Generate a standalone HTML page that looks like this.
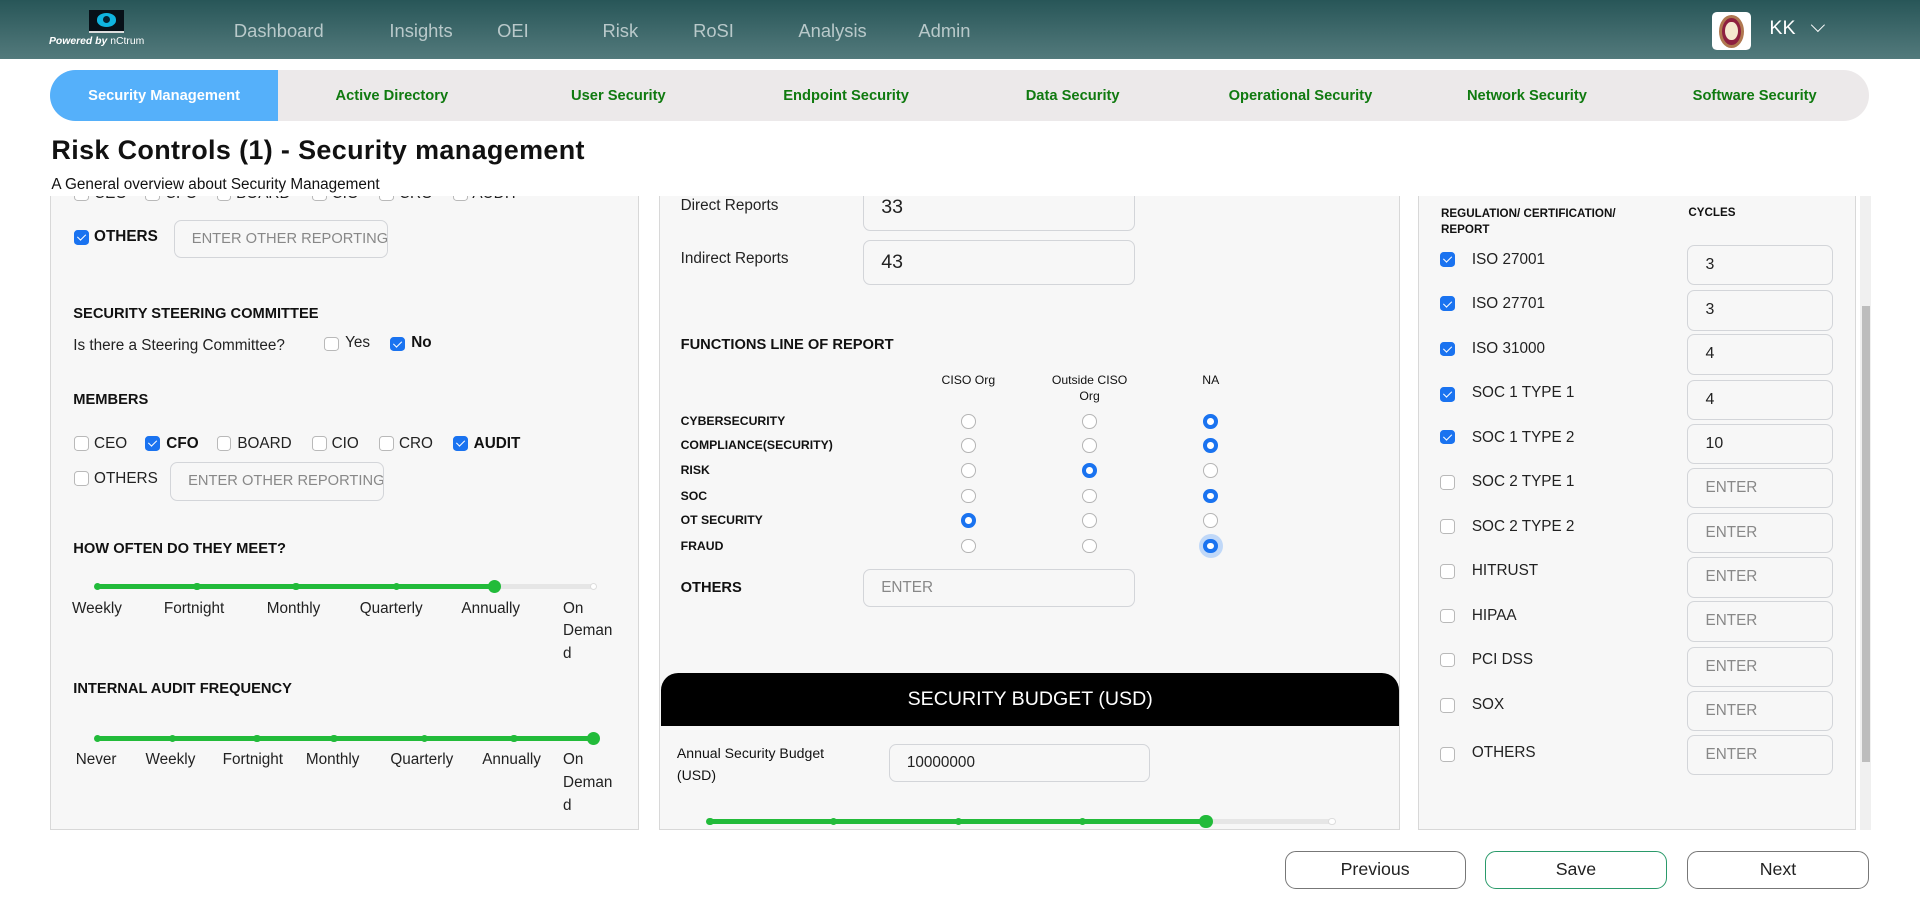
<!DOCTYPE html>
<html><head><meta charset="utf-8">
<style>
*{box-sizing:border-box;margin:0;padding:0}
html,body{width:1920px;height:910px;overflow:hidden;background:#fff}
#root{zoom:1.2245;width:1568px;height:743px;position:relative;font-family:"Liberation Sans",sans-serif;color:#111}
.a{position:absolute;white-space:nowrap}
.hdr{position:absolute;left:0;top:0;width:1568px;height:48px;background:linear-gradient(#285658,#537a7c)}
.nav{position:absolute;top:16px;font-size:15px;color:#b9c9ca}
.tabs{position:absolute;left:41px;top:57px;width:1485px;height:42px;background:#ece9ea;border-radius:21px;overflow:hidden}
.tab{position:absolute;top:0;height:42px;line-height:43px;font-size:12px;font-weight:bold;color:#107a10;text-align:center;width:186px}
.panel{position:absolute;top:160px;background:#f7f7f7;border:1px solid #d8d8d8;border-top:none;overflow:hidden}
.cb{position:absolute;width:12px;height:12px;border:1px solid #b9b9b9;border-radius:3px;background:#fff}
.cb.on{background:#1a73f0;border-color:#1a73f0}
.cb.on:after{content:"";position:absolute;left:3px;top:1px;width:3px;height:6px;border:solid #fff;border-width:0 1.5px 1.5px 0;transform:rotate(45deg)}
.lbl{position:absolute;font-size:12.5px;white-space:nowrap;color:#222}
.b{font-weight:bold;color:#111}
.h{position:absolute;font-size:12px;font-weight:bold;white-space:nowrap;color:#111}
.inp{position:absolute;border:1px solid #d3d5d9;border-radius:6px;background:#f7f7f7;font-size:12.5px;color:#888;padding-left:14px;display:flex;align-items:center;white-space:nowrap;overflow:hidden}
.rd{position:absolute;width:12px;height:12px;border:1px solid #b5b5b5;border-radius:50%;background:#fff}
.rd.on{border:3.5px solid #1a73f0}
.trk{position:absolute;height:4px;background:#e6e6e6;border-radius:2px}
.fil{position:absolute;height:4px;background:#22bb3a;border-radius:2px}
.dot{position:absolute;width:6px;height:6px;border-radius:50%;background:#22bb3a;margin:-1px 0 0 -3px}
.big{position:absolute;width:11px;height:11px;border-radius:50%;background:#22bb3a;margin:-3.5px 0 0 -5.5px}
.sl{position:absolute;font-size:12.5px;color:#222;line-height:18.5px;white-space:normal}
.btn{position:absolute;top:695px;width:148px;height:31px;border:1px solid #777;border-radius:9px;text-align:center;line-height:29px;font-size:14.5px;color:#222}
</style></head><body><div id="root">
<div class="hdr"></div>
<div class="a" style="left:73px;top:8px;width:28px;height:19px;background:#071018;border-bottom:2px solid #ddd"></div>
<div class="a" style="left:79px;top:11px;width:16px;height:11px;border-radius:50%;background:#0fb4e0"></div>
<div class="a" style="left:84px;top:13px;width:6px;height:6px;border-radius:50%;background:#052030"></div>
<div class="a" style="left:40px;top:29px;font-size:8.5px;font-style:italic;color:#fff;font-weight:bold">Powered by <span style="font-weight:normal;font-style:normal">nCtrum</span></div>
<div class="nav" style="left:191px">Dashboard</div>
<div class="nav" style="left:318px">Insights</div>
<div class="nav" style="left:406px">OEI</div>
<div class="nav" style="left:492px">Risk</div>
<div class="nav" style="left:566px">RoSI</div>
<div class="nav" style="left:652px">Analysis</div>
<div class="nav" style="left:750px">Admin</div>
<div class="a" style="left:1398px;top:10px;width:32px;height:31px;background:#fff;border-radius:4px"></div>
<div class="a" style="left:1404px;top:12px;width:20px;height:27px;border-radius:50%;background:#8e2040;border:3px solid #b07850"></div>
<div class="a" style="left:1409px;top:18px;width:10px;height:15px;border-radius:50%;background:#f5e8d0"></div>
<div class="a" style="left:1445px;top:14px;font-size:16px;color:#fff">KK</div>
<div class="a" style="left:1481px;top:16px;width:8px;height:8px;border:solid #fff;border-width:0 1.5px 1.5px 0;transform:rotate(45deg)"></div>

<div class="tabs">
<div class="tab" style="left:0;background:#55b0fa;color:#fff">Security Management</div>
<div class="tab" style="left:186px">Active Directory</div>
<div class="tab" style="left:371px">User Security</div>
<div class="tab" style="left:557px">Endpoint Security</div>
<div class="tab" style="left:742px">Data Security</div>
<div class="tab" style="left:928px">Operational Security</div>
<div class="tab" style="left:1113px">Network Security</div>
<div class="tab" style="left:1299px">Software Security</div>
</div>
<div class="a" style="left:42px;top:110px;font-size:22px;font-weight:bold;letter-spacing:0.3px">Risk Controls (1) - Security management</div>
<div class="a" style="left:42px;top:144px;font-size:12.5px">A General overview about Security Management</div>

<!-- LEFT -->
<div class="panel" style="left:41px;width:481px;height:518px">
<div style="position:absolute;left:-41px;top:-160px;width:600px;height:700px">
<div class="cb" style="left:60px;top:152px"></div><div class="lbl" style="left:76px;top:151px">CEO</div>
<div class="cb" style="left:118px;top:152px"></div><div class="lbl" style="left:134px;top:151px">CFO</div>
<div class="cb" style="left:176px;top:152px"></div><div class="lbl" style="left:192px;top:151px">BOARD</div>
<div class="cb" style="left:254px;top:152px"></div><div class="lbl" style="left:270px;top:151px">CIO</div>
<div class="cb" style="left:309px;top:152px"></div><div class="lbl" style="left:325px;top:151px">CRO</div>
<div class="cb" style="left:369px;top:152px"></div><div class="lbl" style="left:385px;top:151px">AUDIT</div>
<div class="cb on" style="left:60px;top:188px"></div><div class="lbl b" style="left:76px;top:186px">OTHERS</div>
<div class="inp" style="left:141px;top:180px;width:175px;height:31px;font-size:12px">ENTER OTHER REPORTING</div>
<div class="h" style="left:59px;top:250px">SECURITY STEERING COMMITTEE</div>
<div class="lbl" style="left:59px;top:275px">Is there a Steering Committee?</div>
<div class="cb" style="left:264px;top:275px"></div><div class="lbl" style="left:281px;top:273px">Yes</div>
<div class="cb on" style="left:318px;top:275px"></div><div class="lbl b" style="left:335px;top:273px">No</div>
<div class="h" style="left:59px;top:320px">MEMBERS</div>
<div class="cb" style="left:60px;top:356px"></div><div class="lbl" style="left:76px;top:355px">CEO</div>
<div class="cb on" style="left:118px;top:356px"></div><div class="lbl b" style="left:135px;top:355px">CFO</div>
<div class="cb" style="left:176px;top:356px"></div><div class="lbl" style="left:193px;top:355px">BOARD</div>
<div class="cb" style="left:254px;top:356px"></div><div class="lbl" style="left:270px;top:355px">CIO</div>
<div class="cb" style="left:309px;top:356px"></div><div class="lbl" style="left:325px;top:355px">CRO</div>
<div class="cb on" style="left:369px;top:356px"></div><div class="lbl b" style="left:386px;top:355px">AUDIT</div>
<div class="cb" style="left:60px;top:385px"></div><div class="lbl" style="left:76px;top:384px">OTHERS</div>
<div class="inp" style="left:138px;top:377px;width:175px;height:32px;font-size:12px">ENTER OTHER REPORTING</div>
<div class="h" style="left:59px;top:442px">HOW OFTEN DO THEY MEET?</div>
<div class="trk" style="left:79px;top:477px;width:405px"></div>
<div class="fil" style="left:79px;top:477px;width:324px"></div>
<div class="dot" style="left:79px;top:477px"></div><div class="dot" style="left:160px;top:477px"></div><div class="dot" style="left:241px;top:477px"></div><div class="dot" style="left:323px;top:477px"></div><div class="big" style="left:403px;top:477px"></div>
<div class="a" style="left:481px;top:476px;width:6px;height:6px;border-radius:50%;background:#fff;border:1px solid #ddd"></div>
<div class="sl" style="left:58px;top:488px">Weekly</div>
<div class="sl" style="left:133px;top:488px">Fortnight</div>
<div class="sl" style="left:217px;top:488px">Monthly</div>
<div class="sl" style="left:293px;top:488px">Quarterly</div>
<div class="sl" style="left:376px;top:488px">Annually</div>
<div class="sl" style="left:459px;top:488px;width:48px">On<br>Deman<br>d</div>
<div class="h" style="left:59px;top:556px">INTERNAL AUDIT FREQUENCY</div>
<div class="fil" style="left:79px;top:601px;width:405px"></div>
<div class="dot" style="left:79px;top:601px"></div><div class="dot" style="left:140px;top:601px"></div><div class="dot" style="left:209px;top:601px"></div><div class="dot" style="left:272px;top:601px"></div><div class="dot" style="left:346px;top:601px"></div><div class="dot" style="left:419px;top:601px"></div><div class="big" style="left:484px;top:601px"></div>
<div class="sl" style="left:61px;top:612px">Never</div>
<div class="sl" style="left:118px;top:612px">Weekly</div>
<div class="sl" style="left:181px;top:612px">Fortnight</div>
<div class="sl" style="left:249px;top:612px">Monthly</div>
<div class="sl" style="left:318px;top:612px">Quarterly</div>
<div class="sl" style="left:393px;top:612px">Annually</div>
<div class="sl" style="left:459px;top:612px;width:48px">On<br>Deman<br>d</div>
</div></div>

<!-- MIDDLE -->
<div class="panel" style="left:538px;width:605px;height:518px">
<div style="position:absolute;left:-538px;top:-160px;width:1200px;height:700px">
<div class="lbl" style="left:555px;top:161px">Direct Reports</div>
<div class="inp" style="left:704px;top:150px;width:222px;height:39px;font-size:16px;color:#222">33</div>
<div class="lbl" style="left:555px;top:204px">Indirect Reports</div>
<div class="inp" style="left:704px;top:196px;width:222px;height:37px;font-size:16px;color:#222">43</div>
<div class="h" style="left:555px;top:275px">FUNCTIONS LINE OF REPORT</div>
<div class="a" style="left:760px;top:305px;width:60px;text-align:center;font-size:10px">CISO Org</div>
<div class="a" style="left:849px;top:305px;width:80px;text-align:center;font-size:10px;white-space:normal;line-height:13px">Outside CISO Org</div>
<div class="a" style="left:968px;top:305px;width:40px;text-align:center;font-size:10px">NA</div>
<div class="a" style="left:555px;top:338px;font-size:10px;font-weight:bold">CYBERSECURITY</div>
<div class="a" style="left:555px;top:358px;font-size:10px;font-weight:bold">COMPLIANCE(SECURITY)</div>
<div class="a" style="left:555px;top:378px;font-size:10px;font-weight:bold">RISK</div>
<div class="a" style="left:555px;top:399px;font-size:10px;font-weight:bold">SOC</div>
<div class="a" style="left:555px;top:419px;font-size:10px;font-weight:bold">OT SECURITY</div>
<div class="a" style="left:555px;top:440px;font-size:10px;font-weight:bold">FRAUD</div>
<div class="rd" style="left:784px;top:338px"></div><div class="rd" style="left:883px;top:338px"></div><div class="rd on" style="left:982px;top:338px"></div>
<div class="rd" style="left:784px;top:358px"></div><div class="rd" style="left:883px;top:358px"></div><div class="rd on" style="left:982px;top:358px"></div>
<div class="rd" style="left:784px;top:378px"></div><div class="rd on" style="left:883px;top:378px"></div><div class="rd" style="left:982px;top:378px"></div>
<div class="rd" style="left:784px;top:399px"></div><div class="rd" style="left:883px;top:399px"></div><div class="rd on" style="left:982px;top:399px"></div>
<div class="rd on" style="left:784px;top:419px"></div><div class="rd" style="left:883px;top:419px"></div><div class="rd" style="left:982px;top:419px"></div>
<div class="rd" style="left:784px;top:440px"></div><div class="rd" style="left:883px;top:440px"></div>
<div class="a" style="left:978px;top:436px;width:20px;height:20px;border-radius:50%;background:#c0d8f8"></div>
<div class="rd on" style="left:982px;top:440px"></div>
<div class="h" style="left:555px;top:474px">OTHERS</div>
<div class="inp" style="left:704px;top:465px;width:222px;height:31px">ENTER</div>
<div class="a" style="left:539px;top:550px;width:603px;height:43px;background:#000;border-radius:14px 14px 0 0;color:#fff;font-size:16px;text-align:center;line-height:43px">SECURITY BUDGET (USD)</div>
<div class="a" style="left:552px;top:606px;font-size:11.5px;line-height:18px;white-space:normal;width:140px">Annual Security Budget (USD)</div>
<div class="inp" style="left:725px;top:608px;width:213px;height:31px;color:#222">10000000</div>
<div class="trk" style="left:579px;top:669px;width:508px"></div>
<div class="fil" style="left:579px;top:669px;width:405px"></div>
<div class="dot" style="left:579px;top:669px"></div><div class="dot" style="left:680px;top:669px"></div><div class="dot" style="left:782px;top:669px"></div><div class="dot" style="left:883px;top:669px"></div><div class="big" style="left:984px;top:669px"></div>
<div class="a" style="left:1084px;top:668px;width:6px;height:6px;border-radius:50%;background:#fff;border:1px solid #ddd"></div>
</div></div>

<!-- RIGHT -->
<div class="panel" style="left:1158px;width:358px;height:518px">
<div style="position:absolute;left:-1158px;top:-160px;width:1600px;height:700px">
<div class="a" style="left:1176px;top:168px;font-size:9.5px;font-weight:bold;line-height:13px;white-space:normal;width:170px">REGULATION/ CERTIFICATION/ REPORT</div>
<div class="a" style="left:1378px;top:168px;font-size:9.5px;font-weight:bold">CYCLES</div>
</div></div>
<div class="a" style="left:1519px;top:160px;width:9px;height:518px;background:#f0f0f0"></div>
<div class="a" style="left:1521px;top:250px;width:6px;height:372px;background:#bdbdbd"></div>

<div class="btn" style="left:1049px">Previous</div>
<div class="btn" style="left:1213px;border-color:#2a9a6a">Save</div>
<div class="btn" style="left:1378px">Next</div>

<div class="cb on" style="left:1176px;top:206px"></div><div class="lbl" style="left:1202px;top:205px">ISO 27001</div><div class="inp" style="left:1378px;top:200px;width:119px;height:33px;font-size:13px;color:#222">3</div>
<div class="cb on" style="left:1176px;top:242px"></div><div class="lbl" style="left:1202px;top:241px">ISO 27701</div><div class="inp" style="left:1378px;top:237px;width:119px;height:33px;font-size:13px;color:#222">3</div>
<div class="cb on" style="left:1176px;top:279px"></div><div class="lbl" style="left:1202px;top:278px">ISO 31000</div><div class="inp" style="left:1378px;top:273px;width:119px;height:33px;font-size:13px;color:#222">4</div>
<div class="cb on" style="left:1176px;top:316px"></div><div class="lbl" style="left:1202px;top:314px">SOC 1 TYPE 1</div><div class="inp" style="left:1378px;top:310px;width:119px;height:33px;font-size:13px;color:#222">4</div>
<div class="cb on" style="left:1176px;top:351px"></div><div class="lbl" style="left:1202px;top:350px">SOC 1 TYPE 2</div><div class="inp" style="left:1378px;top:346px;width:119px;height:33px;font-size:13px;color:#222">10</div>
<div class="cb" style="left:1176px;top:388px"></div><div class="lbl" style="left:1202px;top:386px">SOC 2 TYPE 1</div><div class="inp" style="left:1378px;top:382px;width:119px;height:33px">ENTER</div>
<div class="cb" style="left:1176px;top:424px"></div><div class="lbl" style="left:1202px;top:423px">SOC 2 TYPE 2</div><div class="inp" style="left:1378px;top:419px;width:119px;height:33px">ENTER</div>
<div class="cb" style="left:1176px;top:461px"></div><div class="lbl" style="left:1202px;top:459px">HITRUST</div><div class="inp" style="left:1378px;top:455px;width:119px;height:33px">ENTER</div>
<div class="cb" style="left:1176px;top:497px"></div><div class="lbl" style="left:1202px;top:496px">HIPAA</div><div class="inp" style="left:1378px;top:491px;width:119px;height:33px">ENTER</div>
<div class="cb" style="left:1176px;top:533px"></div><div class="lbl" style="left:1202px;top:532px">PCI DSS</div><div class="inp" style="left:1378px;top:528px;width:119px;height:33px">ENTER</div>
<div class="cb" style="left:1176px;top:570px"></div><div class="lbl" style="left:1202px;top:568px">SOX</div><div class="inp" style="left:1378px;top:564px;width:119px;height:33px">ENTER</div>
<div class="cb" style="left:1176px;top:610px"></div><div class="lbl" style="left:1202px;top:608px">OTHERS</div><div class="inp" style="left:1378px;top:600px;width:119px;height:33px">ENTER</div>
</div></body></html>
